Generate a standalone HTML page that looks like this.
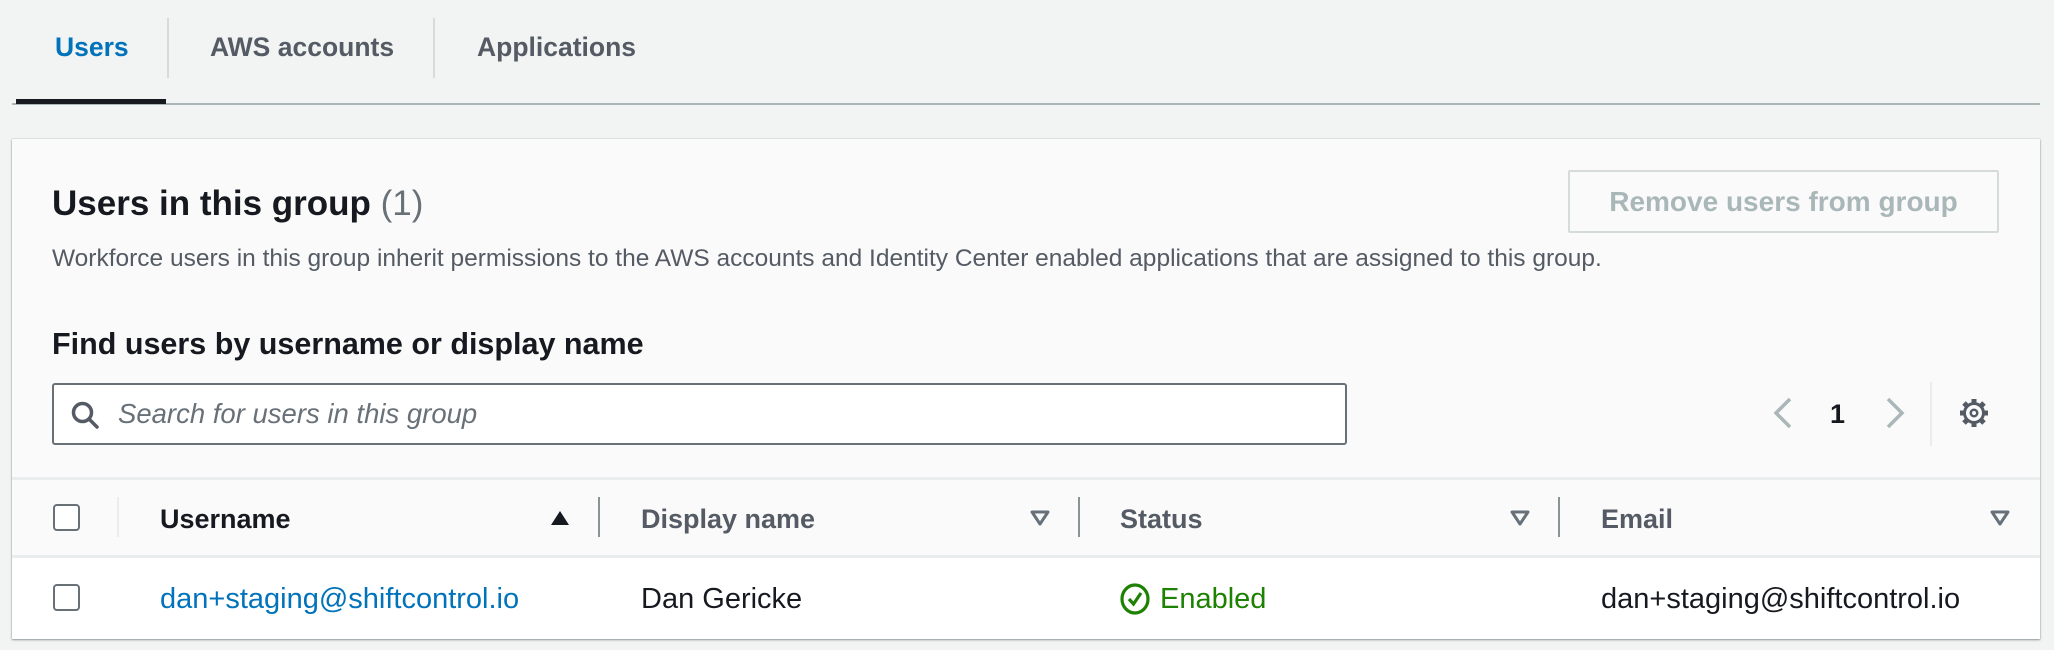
<!DOCTYPE html>
<html><head><meta charset="utf-8"><style>
*{box-sizing:border-box;margin:0;padding:0}
body{width:2054px;height:650px;background:#f2f3f3;font-family:"Liberation Sans",sans-serif;position:relative;overflow:hidden;color:#16191f}
.a{position:absolute;white-space:nowrap}
.tab{font-weight:bold;font-size:26.5px;color:#545b64;top:32px;line-height:30px}
.sep{position:absolute;width:2px;background:#d5dbdb}
.card{position:absolute;left:12px;top:139px;width:2028px;height:500px;background:#fafafa;box-shadow:0 1px 2px rgba(0,28,36,.4),0 0 1px rgba(0,28,36,.3)}
.cb{position:absolute;width:27px;height:27px;border:2px solid #687078;border-radius:4px;background:#fff}
.th{font-weight:bold;font-size:27px;color:#545b64;top:504px;line-height:30px}
.csep{position:absolute;width:2px;background:#879596;top:497px;height:40px}
.td{font-size:29px;line-height:34px;top:582px}
</style></head><body>
<div class="a tab" style="left:55px;color:#0073bb">Users</div>
<div class="sep" style="left:167px;top:18px;height:60px"></div>
<div class="a tab" style="left:210px">AWS accounts</div>
<div class="sep" style="left:433px;top:18px;height:60px"></div>
<div class="a tab" style="left:477px">Applications</div>
<div style="position:absolute;left:12px;top:103px;width:2028px;height:2px;background:#aab7b8"></div>
<div style="position:absolute;left:16px;top:99px;width:150px;height:5px;background:#16191f"></div>

<div class="card"></div>
<div class="a" style="left:52px;top:184px;font-size:35px;font-weight:bold;line-height:40px">Users in this group <span style="font-weight:normal;color:#687078">(1)</span></div>
<div class="a" style="left:52px;top:245px;font-size:24.5px;color:#545b64;line-height:28px">Workforce users in this group inherit permissions to the AWS accounts and Identity Center enabled applications that are assigned to this group.</div>
<div style="position:absolute;left:1568px;top:170px;width:431px;height:63px;border:2px solid #d5dbdb;border-radius:2px;background:#fafafa;color:#aab7b8;font-weight:bold;font-size:28px;text-align:center;line-height:59px">Remove users from group</div>
<div class="a" style="left:52px;top:327px;font-size:30.5px;font-weight:bold;line-height:34px">Find users by username or display name</div>

<div style="position:absolute;left:52px;top:383px;width:1295px;height:62px;border:2px solid #687078;border-radius:3px;background:#fff"></div>
<svg class="a" style="left:70px;top:400px" width="30" height="30" viewBox="0 0 30 30"><circle cx="12.5" cy="12.5" r="9" fill="none" stroke="#545b64" stroke-width="3.5"/><line x1="19" y1="19" x2="27" y2="27" stroke="#545b64" stroke-width="3.5" stroke-linecap="round"/></svg>
<div class="a" style="left:118px;top:398px;font-size:27.5px;font-style:italic;color:#687078;line-height:32px">Search for users in this group</div>

<svg class="a" style="left:1770px;top:396px" width="26" height="34" viewBox="0 0 26 34"><path d="M20 3 L6 17 L20 31" fill="none" stroke="#aab7b8" stroke-width="3.5"/></svg>
<div class="a" style="left:1830px;top:399px;font-size:27px;font-weight:bold;line-height:30px">1</div>
<svg class="a" style="left:1882px;top:396px" width="26" height="34" viewBox="0 0 26 34"><path d="M6 3 L20 17 L6 31" fill="none" stroke="#aab7b8" stroke-width="3.5"/></svg>
<div class="sep" style="left:1930px;top:382px;height:64px;background:#e9ebed"></div>
<svg class="a" style="left:1956px;top:395px" width="36" height="36" viewBox="0 0 36 36">
<g stroke="#545b64" stroke-width="5" stroke-linecap="butt">
<line x1="18" y1="4" x2="18" y2="32"/><line x1="4" y1="18" x2="32" y2="18"/><line x1="8" y1="8" x2="28" y2="28"/><line x1="28" y1="8" x2="8" y2="28"/></g>
<circle cx="18" cy="18" r="11" fill="#545b64"/><circle cx="18" cy="18" r="8" fill="#fafafa"/><circle cx="18" cy="18" r="4.5" fill="#545b64"/><circle cx="18" cy="18" r="2" fill="#fafafa"/></svg>

<div style="position:absolute;left:12px;top:477px;width:2028px;height:3px;background:#eaeded"></div>
<div style="position:absolute;left:12px;top:555px;width:2028px;height:3px;background:#eaeded"></div>
<div style="position:absolute;left:12px;top:558px;width:2028px;height:81px;background:#fff"></div>
<div class="cb" style="left:53px;top:504px"></div>
<div class="csep" style="left:117px;background:#eaeded"></div>
<div class="a th" style="left:160px;color:#16191f">Username</div>
<svg class="a" style="left:550px;top:510px" width="20" height="16"><path d="M10 1 L19 15 H1z" fill="#16191f"/></svg>
<div class="csep" style="left:598px"></div>
<div class="a th" style="left:641px">Display name</div>
<svg class="a" style="left:1030px;top:510px" width="20" height="16"><path d="M2 2 H18 L10 14z" fill="none" stroke="#687078" stroke-width="3" stroke-linejoin="round"/></svg>
<div class="csep" style="left:1078px"></div>
<div class="a th" style="left:1120px">Status</div>
<svg class="a" style="left:1510px;top:510px" width="20" height="16"><path d="M2 2 H18 L10 14z" fill="none" stroke="#687078" stroke-width="3" stroke-linejoin="round"/></svg>
<div class="csep" style="left:1558px"></div>
<div class="a th" style="left:1601px">Email</div>
<svg class="a" style="left:1990px;top:510px" width="20" height="16"><path d="M2 2 H18 L10 14z" fill="none" stroke="#687078" stroke-width="3" stroke-linejoin="round"/></svg>

<div class="cb" style="left:53px;top:584px"></div>
<div class="a td" style="left:160px;color:#0073bb">dan+staging@shiftcontrol.io</div>
<div class="a td" style="left:641px">Dan Gericke</div>
<svg class="a" style="left:1119px;top:582px" width="32" height="34" viewBox="0 0 32 34"><ellipse cx="16" cy="17" rx="13" ry="14" fill="none" stroke="#1d8102" stroke-width="3.2"/><path d="M10 17 L14.5 22 L22 11" fill="none" stroke="#1d8102" stroke-width="3.2"/></svg>
<div class="a td" style="left:1160px;color:#1d8102">Enabled</div>
<div class="a td" style="left:1601px">dan+staging@shiftcontrol.io</div>
</body></html>
